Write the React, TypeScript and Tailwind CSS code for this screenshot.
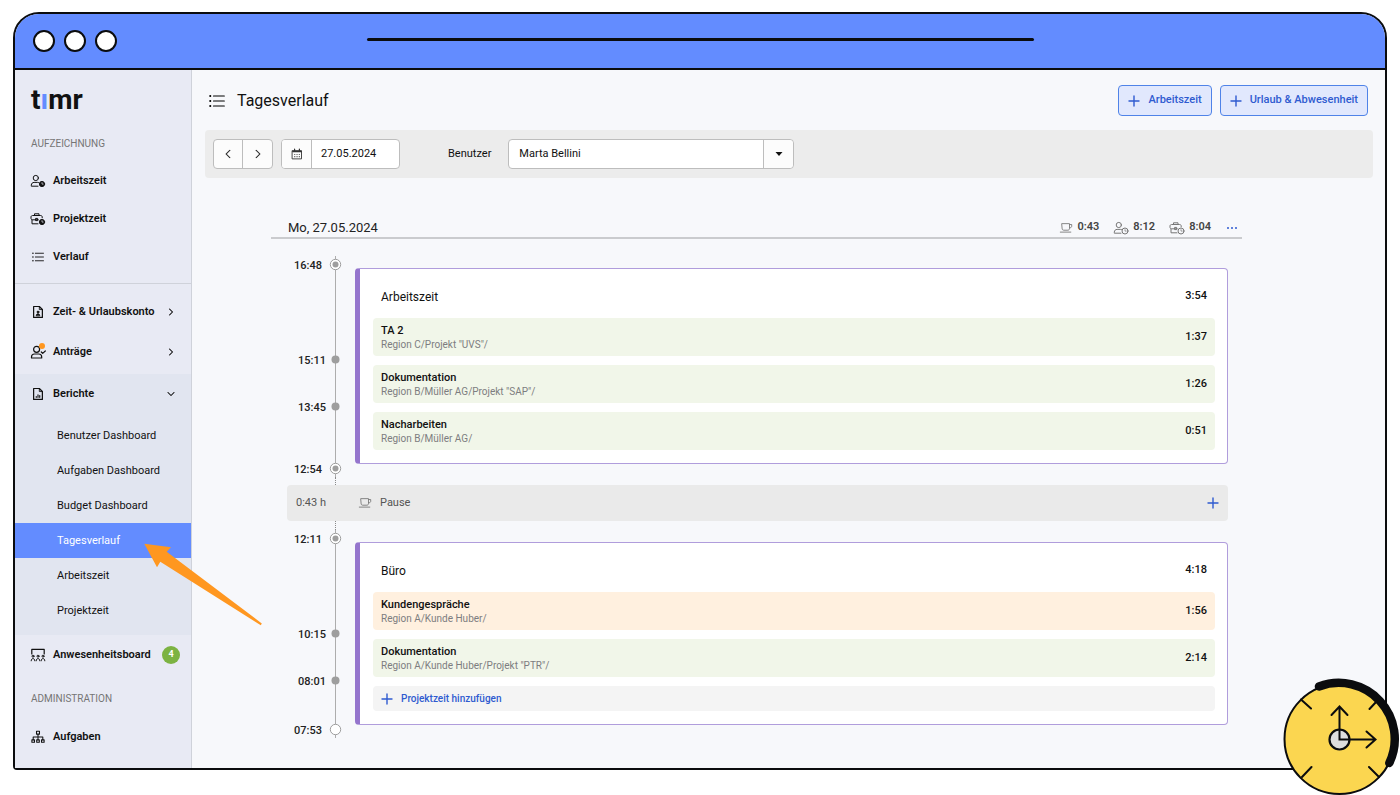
import { useState, type ReactNode } from "react";
import { BsChevronDown, BsChevronLeft, BsChevronRight } from "react-icons/bs";
import clsx from "clsx";

type IconProps = { className?: string };
type MarkerKind = "ring" | "dot" | "open";

type Mark = { time: string; kind: MarkerKind; height: string };
type Task = { name: string; path: string; duration: string; tone: "green" | "orange" };
type Session = { title: string; duration: string; marks: Mark[]; tasks: Task[]; canAdd?: boolean };

const sessions: Session[] = [
  {
    title: "Arbeitszeit",
    duration: "3:54",
    marks: [
      { time: "16:48", kind: "ring", height: "h-[95px]" },
      { time: "15:11", kind: "dot", height: "h-[47px]" },
      { time: "13:45", kind: "dot", height: "h-[62px]" },
      { time: "12:54", kind: "ring", height: "h-[17px]" },
    ],
    tasks: [
      { name: "TA 2", path: 'Region C/Projekt "UVS"/', duration: "1:37", tone: "green" },
      { name: "Dokumentation", path: 'Region B/Müller AG/Projekt "SAP"/', duration: "1:26", tone: "green" },
      { name: "Nacharbeiten", path: "Region B/Müller AG/", duration: "0:51", tone: "green" },
    ],
  },
  {
    title: "Büro",
    duration: "4:18",
    marks: [
      { time: "12:11", kind: "ring", height: "h-[95px]" },
      { time: "10:15", kind: "dot", height: "h-[47px]" },
      { time: "08:01", kind: "dot", height: "h-[49px]" },
      { time: "07:53", kind: "open", height: "h-[17px]" },
    ],
    tasks: [
      { name: "Kundengespräche", path: "Region A/Kunde Huber/", duration: "1:56", tone: "orange" },
      { name: "Dokumentation", path: 'Region A/Kunde Huber/Projekt "PTR"/', duration: "2:14", tone: "green" },
    ],
    canAdd: true,
  },
];

const reports = [
  "Benutzer Dashboard",
  "Aufgaben Dashboard",
  "Budget Dashboard",
  "Tagesverlauf",
  "Arbeitszeit",
  "Projektzeit",
];

/* Icons */

function Icon({ className, children, box = "0 0 16 16" }: IconProps & { children: ReactNode; box?: string }) {
  return (
    <svg
      viewBox={box}
      className={clsx("shrink-0", className)}
      fill="none"
      stroke="currentColor"
      strokeLinecap="round"
      strokeLinejoin="round"
      aria-hidden="true"
    >
      {children}
    </svg>
  );
}

function ClockBadge({ solid }: { solid?: boolean }) {
  return (
    <>
      <circle cx="12" cy="11" r={solid ? 2.6 : 3} fill={solid ? "currentColor" : "none"} />
      <path d="M12 9.600v1.500h1.200" stroke={solid ? "#e8eaf4" : "currentColor"} strokeWidth="0.7" />
    </>
  );
}

function PersonClock({ className, solid }: IconProps & { solid?: boolean }) {
  return (
    <Icon className={className}>
      <circle cx="5.800" cy="5" r="2.600" />
      <path d="M8 13.200H1.300v-1c0-1.800 1.300-2.800 2.800-2.800h3.200c.4 0 .8.100 1.200.200" />
      <ClockBadge solid={solid} />
    </Icon>
  );
}

function BriefcaseClock({ className, solid }: IconProps & { solid?: boolean }) {
  return (
    <Icon className={className}>
      <path d="M4.500 4.500V2.800h4.500v1.700M8 12.800H2V9M12.200 6.800V6c0-.9-.6-1.500-1.500-1.500H2.600C1.700 4.500 1 5.100 1 6v1.300c0 .9.600 1.500 1.500 1.500H8.300M5.600 7.800v1.800h2V7.800z" />
      <ClockBadge solid={solid} />
    </Icon>
  );
}

function ListIcon({ className }: IconProps) {
  return (
    <Icon className={className}>
      <path d="M4.500 3H15.300M4.500 8H15.300M4.500 13H15.300" strokeWidth="1.200" />
      <path d="M1.200 3h.1M1.200 8h.1M1.200 13h.1" strokeWidth="2" />
    </Icon>
  );
}

function FilePerson({ className }: IconProps) {
  return (
    <Icon className={className}>
      <path d="M3 1.700h6.500l3.500 3.500v9H3z" strokeWidth="1.400" />
      <path d="M9.500 1.700v3.500H13" />
      <circle cx="8" cy="8" r="1.100" fill="currentColor" />
      <path d="M6 12c0-1.300.9-1.900 2-1.900s2 .6 2 1.900z" fill="currentColor" />
    </Icon>
  );
}

function FileChart({ className }: IconProps) {
  return (
    <Icon className={className}>
      <path d="M3 1.700h6.500l3.500 3.500v9H3z" strokeWidth="1.400" />
      <path d="M9.500 1.700v3.500H13" />
      <path d="M6 11.800v-1M8 11.800V8.800M10 11.800v-2" strokeWidth="1.300" />
    </Icon>
  );
}

function PersonCheck({ className }: IconProps) {
  return (
    <Icon className={className}>
      <circle cx="6.600" cy="5.300" r="3" strokeWidth="1.200" />
      <path d="M1.500 14v-1.100c0-1.900 1.400-2.900 3-2.900h4.200c1.700 0 3 1 3 2.900V14z" strokeWidth="1.200" />
      <path d="M11.300 8l1.400 1.400L15.300 7" strokeWidth="1.200" />
    </Icon>
  );
}

function BoardIcon({ className }: IconProps) {
  return (
    <Icon className={className}>
      <path d="M1.800 7V2.300h12.400V7" strokeWidth="1.200" />
      <circle cx="3" cy="9.200" r="1" />
      <circle cx="8" cy="9.200" r="1" />
      <circle cx="13" cy="9.200" r="1" />
      <path d="M1.200 13.800c0-1.300.7-2.200 1.800-2.200s1.800.9 1.800 2.200M6.200 13.800c0-1.300.7-2.200 1.800-2.200s1.800.9 1.800 2.200M11.200 13.800c0-1.300.7-2.200 1.800-2.200s1.800.9 1.800 2.200" />
    </Icon>
  );
}

function OrgIcon({ className }: IconProps) {
  return (
    <Icon className={className}>
      <path d="M6.300 1.500h3.400v3.200H6.300zM8 4.700v6.300M2.500 11V8h11v3" strokeWidth="1.200" />
      <path d="M1 11.300h3V14H1zM6.500 11.300h3V14h-3zM12 11.300h3V14h-3z" strokeWidth="1.200" />
    </Icon>
  );
}

function CupIcon({ className }: IconProps) {
  return (
    <Icon className={className}>
      <path d="M3.500 3h8.500v5.500c0 1.200-.7 2-1.800 2H5.300c-1.100 0-1.800-.8-1.800-2zM12 4h2.500v2c0 1.100-.8 1.900-2.500 1.900M1.500 12.700h12" />
    </Icon>
  );
}

function CalendarIcon({ className }: IconProps) {
  return (
    <Icon className={className}>
      <path d="M2 3.500h12v11H2z" strokeWidth="1.200" />
      <path d="M2.500 4.800h11" strokeWidth="2" />
      <path d="M4.800 1.300v2M11.200 1.300v2" strokeWidth="1.600" />
      <path d="M5 8.700h.1M8 8.700h.1M11 8.700h.1M5 11.500h.1M8 11.500h.1M11 11.500h.1" strokeWidth="1.400" />
    </Icon>
  );
}

function PlusIcon({ className }: IconProps) {
  return (
    <Icon className={className} box="0 0 12 12">
      <path d="M6 1v10M1 6h10" strokeWidth="1.400" />
    </Icon>
  );
}

function Marker({ kind }: { kind: MarkerKind }) {
  return (
    <svg viewBox="0 0 17 17" className="size-[17px] shrink-0 text-[#9e9e9e]" aria-hidden="true">
      <path d="M8.500 0v17" stroke="#adadad" />
      {kind === "dot" ? (
        <circle cx="8.500" cy="8.500" r="4" fill="currentColor" />
      ) : (
        <circle cx="8.500" cy="8.500" r="5.200" fill="#fff" stroke="currentColor" />
      )}
      {kind === "ring" && <circle cx="8.500" cy="8.500" r="3" fill="currentColor" />}
    </svg>
  );
}

function ClockDrawing({ className }: IconProps) {
  return (
    <svg viewBox="0 0 118 118" className={className} fill="none" stroke="#0b0c0e" strokeLinecap="round" aria-hidden="true">
      <circle cx="57.500" cy="62" r="55" fill="#fbd650" strokeWidth="2" />
      <path d="M37 9.500A56 56 0 0 1 107.300 86" strokeWidth="8.500" />
      <path d="M19 22.500l10 9M94.500 24.500l-7 7.500M20 100l9.500-10M97 100l-10-10" strokeWidth="2" />
      <circle cx="57.500" cy="62.500" r="10" fill="#dedede" strokeWidth="2.200" />
      <path d="M57.500 30v32.500h35.500M49.500 38l8-8.500 8 8.500M84.500 54.500l9 8-9 8" strokeWidth="2" />
    </svg>
  );
}

function PointerArrow({ className }: IconProps) {
  return (
    <svg viewBox="0 0 122 86" className={className} aria-hidden="true">
      <path d="M.3.700L27 4.300l-4.300 4.400L117.800 80.500l-1 1.800L16.300 18.700 13 24.300z" fill="#ff9720" />
    </svg>
  );
}

/* Sidebar */

function NavItem({ icon, label, tall, children }: { icon: ReactNode; label: string; tall?: boolean; children?: ReactNode }) {
  return (
    <a
      href="#"
      className={clsx("flex items-center pt-0.5 pr-[11px] pl-4 text-[11px] font-semibold text-[#111]", tall ? "h-10" : "h-[38px]")}
    >
      <span className="relative mr-2 flex w-3.5 justify-center">{icon}</span>
      {label}
      <span className="ml-auto flex w-[18px] justify-center">{children}</span>
    </a>
  );
}

function Sidebar() {
  const [active, setActive] = useState("Tagesverlauf");

  return (
    <nav className="w-[177px] shrink-0 border-r border-[#cfd2da] bg-[#e8eaf4]">
      <div className="mt-[17px] flex h-[26px] items-center pl-4 text-[28px] leading-none font-bold text-[#111]">
        t<span className="text-[#638cff]">ı</span>mr
      </div>

      <h2 className="mt-[23px] mb-[9px] pl-4 text-[10px] leading-4 text-[#757575]">AUFZEICHNUNG</h2>
      <NavItem icon={<PersonClock solid className="size-4" />} label="Arbeitszeit" />
      <NavItem icon={<BriefcaseClock solid className="size-4" />} label="Projektzeit" />
      <NavItem icon={<ListIcon className="size-3" />} label="Verlauf" />

      <div className="mt-2 border-t border-[#cfd2da] pt-[7px] pb-[3px]">
        <NavItem tall icon={<FilePerson className="size-3.5" />} label="Zeit- & Urlaubskonto">
          <BsChevronRight className="size-2" strokeWidth={1} />
        </NavItem>
        <NavItem
          tall
          icon={
            <>
              <PersonCheck className="size-4" />
              <span className="absolute -top-px right-0 size-1.5 rounded-full bg-[#ff9720]" />
            </>
          }
          label="Anträge"
        >
          <BsChevronRight className="size-2" strokeWidth={1} />
        </NavItem>
      </div>

      <div className="bg-[#e1e5f0] pb-[7px]">
        <NavItem icon={<FileChart className="size-3.5" />} label="Berichte">
          <BsChevronDown className="size-2" strokeWidth={1} />
        </NavItem>
        <ul className="mt-1.5 text-[11px]">
          {reports.map((name) => (
            <li key={name} className="relative">
              <a
                href="#"
                onClick={() => setActive(name)}
                className={clsx(
                  "flex h-[35px] items-center pt-0.5 pl-[42px]",
                  name === active ? "bg-[#638cff] text-white" : "text-[#111]"
                )}
              >
                {name}
              </a>
              {name === "Tagesverlauf" && (
                <PointerArrow className="pointer-events-none absolute top-5 left-[129px] z-10 h-[86px] w-[122px]" />
              )}
            </li>
          ))}
        </ul>
      </div>

      <NavItem icon={<BoardIcon className="size-4" />} label="Anwesenheitsboard">
        <span className="flex size-[18px] shrink-0 items-center justify-center rounded-full bg-[#7cb342] text-[9px] font-bold text-white">
          4
        </span>
      </NavItem>

      <h2 className="mt-[18px] mb-2.5 pl-4 text-[10px] leading-4 text-[#757575]">ADMINISTRATION</h2>
      <NavItem icon={<OrgIcon className="size-3.5" />} label="Aufgaben" />
    </nav>
  );
}

/* Main area */

function ActionButton({ children }: { children: ReactNode }) {
  return (
    <button className="flex h-[31px] items-center gap-2 rounded border border-[#4f83e8] bg-[#e1e8fd] px-[9px] text-[11px] font-medium text-[#2f5bd0]">
      <PlusIcon className="size-3" />
      {children}
    </button>
  );
}

function FilterBar() {
  const [date, setDate] = useState("27.05.2024");

  return (
    <div className="mt-3.5 flex items-center rounded bg-[#ececec] px-2 py-[9px] text-[11px] text-[#111]">
      <div className="flex h-[30px] overflow-hidden rounded border border-[#bdbdbd] bg-[#fcfcfc]">
        <button aria-label="Vorheriger Tag" className="flex w-[29px] items-center justify-center border-r border-[#bdbdbd]">
          <BsChevronLeft className="size-2.5" strokeWidth={0.5} />
        </button>
        <button aria-label="Nächster Tag" className="flex w-[29px] items-center justify-center">
          <BsChevronRight className="size-2.5" strokeWidth={0.5} />
        </button>
      </div>

      <div className="ml-2 flex h-[30px] w-[119px] overflow-hidden rounded border border-[#bdbdbd] bg-white">
        <button aria-label="Kalender" className="flex w-[30px] shrink-0 items-center justify-center border-r border-[#bdbdbd] bg-[#fcfcfc]">
          <CalendarIcon className="size-3 text-[#333]" />
        </button>
        <input
          aria-label="Datum"
          value={date}
          onChange={(e) => setDate(e.target.value)}
          className="w-full min-w-0 px-[9px] outline-none"
        />
      </div>

      <label htmlFor="user" className="mr-[17px] ml-12">
        Benutzer
      </label>
      <div className="relative w-[286px]">
        <select id="user" className="h-[30px] w-full appearance-none rounded border border-[#bdbdbd] bg-white pr-8 pl-2.5">
          <option>Marta Bellini</option>
        </select>
        <span className="pointer-events-none absolute inset-y-px right-px flex w-[30px] items-center justify-center rounded-r border-l border-[#bdbdbd] bg-[#fcfcfc]">
          <svg viewBox="0 0 8 4" className="h-1 w-2" aria-hidden="true">
            <path d="M.5 0h7L4 4z" fill="#111" />
          </svg>
        </span>
      </div>
    </div>
  );
}

function SessionBlock({ session, trailing, leading }: { session: Session; leading?: boolean; trailing?: boolean }) {
  return (
    <section className="flex">
      <div className="shrink-0">
        <div className={clsx("ml-12 h-[9px] border-l border-dotted", leading ? "border-[#8a8a8a]" : "border-transparent")} />
        <ol>
          {session.marks.map((mark, i) => (
            <li key={mark.time} className={clsx("flex", mark.height)}>
              <span
                className={clsx(
                  "w-10 text-right text-[11px] leading-[19px] font-medium text-[#222]",
                  mark.kind === "dot" ? "pr-px" : "pr-[5px]"
                )}
              >
                {mark.time}
              </span>
              <span className="flex flex-col items-center">
                <Marker kind={mark.kind} />
                {i < session.marks.length - 1 && <span className="w-px flex-1 bg-[#adadad]" />}
              </span>
            </li>
          ))}
        </ol>
        {trailing && <div className="ml-12 h-2 border-l border-dotted border-[#8a8a8a]" />}
      </div>

      <div className="mt-[21px] ml-[11px] flex-1 self-start rounded border border-l-[5px] border-[#b09ddc] border-l-[#9575cd] bg-white pr-3 pb-[13px] pl-[13px] text-[11px] text-[#111]">
        <h3 className="flex h-[49px] items-center justify-between px-2 pt-1.5 text-xs">
          {session.title}
          <span className="text-[11px] font-medium">{session.duration}</span>
        </h3>
        <ul className="flex flex-col gap-[9px]">
          {session.tasks.map((task) => (
            <li
              key={task.name}
              className={clsx(
                "flex h-[38px] items-center justify-between rounded px-2 pt-px",
                task.tone === "green" ? "bg-[#f1f6e9]" : "bg-[#fff0df]"
              )}
            >
              <div className="leading-[14px]">
                <p className="font-medium">{task.name}</p>
                <p className="text-[10px] text-[#7d7d80]">{task.path}</p>
              </div>
              <span className="font-medium">{task.duration}</span>
            </li>
          ))}
          {session.canAdd && (
            <li>
              <button className="flex h-[25px] w-full items-center gap-2 rounded bg-[#f4f4f4] px-2 text-[10px] font-medium text-[#2f5bd0]">
                <PlusIcon className="size-3" />
                Projektzeit hinzufügen
              </button>
            </li>
          )}
        </ul>
      </div>
    </section>
  );
}

function DayView() {
  return (
    <div className="mt-10 mr-[131px] ml-[66px]">
      <header className="flex h-[21px] items-center border-b-2 border-[#cacbce] pl-[17px] text-[#222]">
        <h2 className="text-[13px]">Mo, 27.05.2024</h2>
        <div className="ml-auto flex items-center gap-3.5 text-[11px] font-semibold text-[#444]">
          <span className="flex items-center gap-1">
            <CupIcon className="size-3.5 text-[#777]" />
            0:43
          </span>
          <span className="flex items-center gap-1">
            <PersonClock className="size-4 text-[#777]" />
            8:12
          </span>
          <span className="flex items-center gap-1">
            <BriefcaseClock className="size-4 text-[#777]" />
            8:04
          </span>
          <button aria-label="Mehr" className="flex w-[17px] gap-0.5 pl-0.5">
            <span className="size-0.5 rounded-full bg-[#2f5bd0]" />
            <span className="size-0.5 rounded-full bg-[#2f5bd0]" />
            <span className="size-0.5 rounded-full bg-[#2f5bd0]" />
          </button>
        </div>
      </header>

      <div className="mt-2 pr-3.5 pl-4">
        <SessionBlock session={sessions[0]} trailing />
        <div className="flex h-9 items-center rounded bg-[#eaeaea] px-[9px] text-[11px] text-[#555]">
          <span className="w-[62px]">0:43 h</span>
          <CupIcon className="mr-2 size-3.5 text-[#777]" />
          Pause
          <button aria-label="Pause hinzufügen" className="ml-auto text-[#2f5bd0]">
            <PlusIcon className="size-3" />
          </button>
        </div>
        <SessionBlock session={sessions[1]} leading />
      </div>
    </div>
  );
}

export default function App() {
  return (
    <div className="relative min-h-screen bg-white px-[13px] pt-3 pb-[25px] font-['Roboto',sans-serif]">
      <div className="rounded-t-[26px] rounded-b-sm border-2 border-[#0b0c0e] bg-[#f7f8fb]">
        <div className="flex h-14 items-center rounded-t-[24px] border-b-2 border-[#0b0c0e] bg-[#638cff]">
          <div className="flex flex-1 gap-[9px] pl-[18px]">
            <span className="size-[22px] rounded-full border-2 border-[#0b0c0e] bg-white" />
            <span className="size-[22px] rounded-full border-2 border-[#0b0c0e] bg-white" />
            <span className="size-[22px] rounded-full border-2 border-[#0b0c0e] bg-white" />
          </div>
          <div className="mb-1 h-[3px] w-[667px] rounded-full bg-[#0b0c0e]" />
          <div className="flex-1 pr-[18px]" />
        </div>

        <div className="flex">
          <Sidebar />
          <main className="min-w-0 flex-1 pt-[15px] pr-3 pb-[30px] pl-[13px]">
            <header className="flex items-center gap-2 pr-[5px]">
              <ListIcon className="ml-1 size-4" />
              <h1 className="ml-1 text-base text-[#111]">Tagesverlauf</h1>
              <div className="ml-auto flex gap-2">
                <ActionButton>Arbeitszeit</ActionButton>
                <ActionButton>Urlaub & Abwesenheit</ActionButton>
              </div>
            </header>
            <FilterBar />
            <DayView />
          </main>
        </div>
      </div>
      <ClockDrawing className="pointer-events-none absolute right-0 bottom-0 size-[118px]" />
    </div>
  );
}
